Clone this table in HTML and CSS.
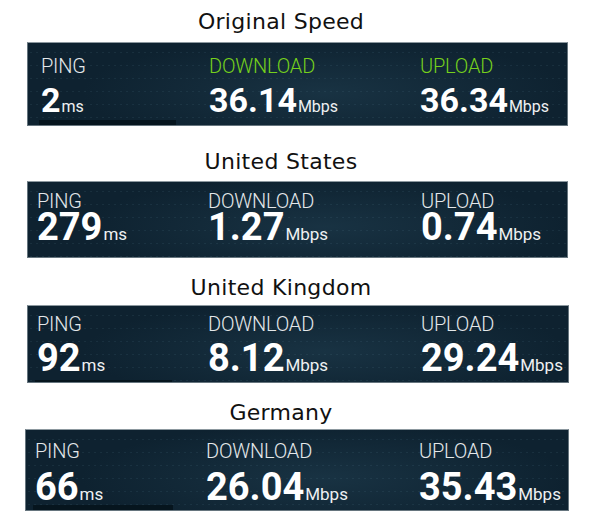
FILE: index.html
```html
<!DOCTYPE html>
<html lang="en">
<head>
<meta charset="utf-8">
<title>Speed comparison</title>
<link rel="stylesheet" href="styles.css">
</head>
<body>
<main class="page">
  <section class="test s1">
    <h2 class="title">Original Speed</h2>
    <div class="panel p1">
      <div class="col"><div class="label">PING</div><div class="value">2<span class="unit">ms</span></div></div>
      <div class="col"><div class="label green">DOWNLOAD</div><div class="value">36.14<span class="unit">Mbps</span></div></div>
      <div class="col"><div class="label green">UPLOAD</div><div class="value">36.34<span class="unit">Mbps</span></div></div>
      <div class="bar"></div>
    </div>
  </section>
  <section class="test s2">
    <h2 class="title">United States</h2>
    <div class="panel p2">
      <div class="col"><div class="label">PING</div><div class="value">279<span class="unit">ms</span></div></div>
      <div class="col"><div class="label">DOWNLOAD</div><div class="value">1.27<span class="unit">Mbps</span></div></div>
      <div class="col"><div class="label">UPLOAD</div><div class="value">0.74<span class="unit">Mbps</span></div></div>
    </div>
  </section>
  <section class="test s3">
    <h2 class="title">United Kingdom</h2>
    <div class="panel p3">
      <div class="col"><div class="label">PING</div><div class="value">92<span class="unit">ms</span></div></div>
      <div class="col"><div class="label">DOWNLOAD</div><div class="value">8.12<span class="unit">Mbps</span></div></div>
      <div class="col"><div class="label">UPLOAD</div><div class="value">29.24<span class="unit">Mbps</span></div></div>
      <div class="bar thin"></div>
    </div>
  </section>
  <section class="test s4">
    <h2 class="title">Germany</h2>
    <div class="panel p4">
      <div class="col"><div class="label">PING</div><div class="value">66<span class="unit">ms</span></div></div>
      <div class="col"><div class="label">DOWNLOAD</div><div class="value">26.04<span class="unit">Mbps</span></div></div>
      <div class="col"><div class="label">UPLOAD</div><div class="value">35.43<span class="unit">Mbps</span></div></div>
      <div class="bar"></div>
    </div>
  </section>
</main>
</body>
</html>
```
FILE: styles.css
```css
html, body {
  margin: 0;
  padding: 0;
  background: #ffffff;
}

.page {
  width: 600px;
  padding-top: 9px;
  display: flex;
  flex-direction: column;
}

.title {
  margin: 0;
  padding-right: 38px;
  text-align: center;
  font-family: "DejaVu Sans", Verdana, sans-serif;
  font-weight: normal;
  font-size: 22px;
  line-height: 26px;
  letter-spacing: 0.3px;
  color: #111111;
}

.s1 .title { margin-bottom: 7px; }
.s2 { margin-top: 23px; }
.s2 .title { margin-bottom: 6px; }
.s3 { margin-top: 17px; }
.s3 .title { margin-bottom: 4px; }
.s4 { margin-top: 17px; }
.s4 .title { margin-bottom: 3px; }

.panel {
  position: relative;
  margin-left: 27px;
  width: 541px;
  box-sizing: border-box;
  border: 1px solid #66757e;
  border-top-color: #8c989f;
  display: grid;
  grid-template-columns: 171px 213px 1fr;
  padding-left: 9px;
  background-color: #0e2230;
  background-image:
    radial-gradient(circle, rgba(110, 160, 180, 0.10) 0.7px, transparent 1.1px),
    radial-gradient(ellipse 60% 90% at 55% 60%, rgba(40, 75, 95, 0.40), rgba(14, 34, 48, 0) 75%);
  background-size: 6px 13px, 100% 100%;
  background-position: 0 3px, 0 0;
  font-family: Roboto, "Liberation Sans", sans-serif;
  color: #f4f6f7;
}

.p1 { padding: 13px 0 10px 13px; grid-template-columns: 168px 211px 1fr; }
.p2 { padding-top: 9px; padding-bottom: 15px; }
.p3 { padding-top: 8px; padding-bottom: 9px; width: 542px; }
.p4 { padding-top: 11px; padding-bottom: 8px; margin-left: 25px; width: 544px; }

.col {
  display: flex;
  flex-direction: column;
}

.label {
  font-size: 20px;
  line-height: 20px;
  height: 20px;
  font-weight: 300;
  color: #e4e8ea;
  letter-spacing: -0.2px;
}

.label.green { color: #76d11c; }

.value {
  font-size: 38px;
  line-height: 30px;
  height: 30px;
  font-weight: 700;
  color: #ffffff;
  white-space: nowrap;
}

.p1 .value { font-size: 34px; margin-top: 9px; }
.p2 .value { margin-top: 1px; }
.p3 .value { margin-top: 9px; }
.p4 .value { margin-top: 11px; }

.unit {
  font-size: 17px;
  line-height: 0;
  font-weight: 400;
  color: #eef1f2;
  margin-left: 1px;
}

.p1 .unit { font-size: 16px; }

.bar {
  position: absolute;
  left: 11px;
  bottom: 0;
  width: 137px;
  height: 5px;
  background: #06151e;
}

.bar.thin { height: 2px; left: 7px; }
.p4 .bar { left: 7px; width: 140px; }
```
